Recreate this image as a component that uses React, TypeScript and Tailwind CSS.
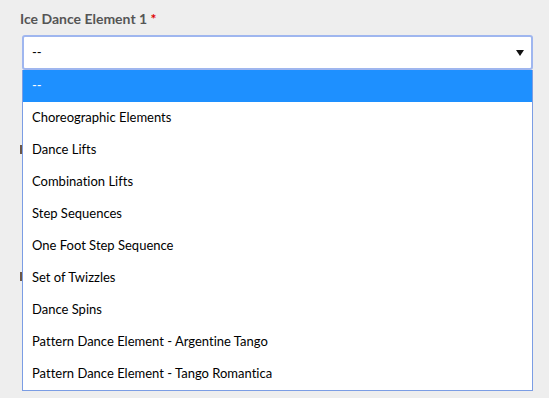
const options = [
  "Choreographic Elements",
  "Dance Lifts",
  "Combination Lifts",
  "Step Sequences",
  "One Foot Step Sequence",
  "Set of Twizzles",
  "Dance Spins",
  "Pattern Dance Element - Argentine Tango",
  "Pattern Dance Element - Tango Romantica",
];

export default function App() {
  return (
    <div className="relative h-[398px] w-[549px] overflow-hidden bg-[#eeeeee] font-['Lato',sans-serif] [font-variant-ligatures:none]">
      {/* bits of the labels underneath the open list */}
      <div className="absolute left-[20px] top-[145px] h-[9px] w-[2px] bg-[#6b5646]" />
      <div className="absolute left-[20px] top-[272px] h-[9px] w-[2px] bg-[#6b5646]" />

      <div className="px-[20px] pt-[10px]">
        <label className="block text-[14px] leading-[17px] font-bold text-[#555555]">
          Ice Dance Element 1 <span className="text-[#e00000]">*</span>
        </label>
        <div className="mt-[8px] ml-[2px] w-[511px]">
          <div className="flex h-[35px] items-center justify-between rounded-[3px] border-2 border-[#9fb6ef] bg-white pr-[7px] pl-[8px] text-[13px] text-black">
            <span>--</span>
            <svg width="8" height="6" viewBox="0 0 8 6">
              <path d="M0 0h8L4 6z" fill="#111" />
            </svg>
          </div>
          <div className="border border-t-0 border-[#7b9de4] bg-white text-[13px] text-black">
            <div className="flex h-[32px] items-center bg-[#1e90ff] pl-[9px] text-white">--</div>
            {options.map((o) => (
              <div key={o} className="flex h-[32px] items-center pl-[9px]">
                {o}
              </div>
            ))}
          </div>
        </div>
      </div>
    </div>
  );
}
